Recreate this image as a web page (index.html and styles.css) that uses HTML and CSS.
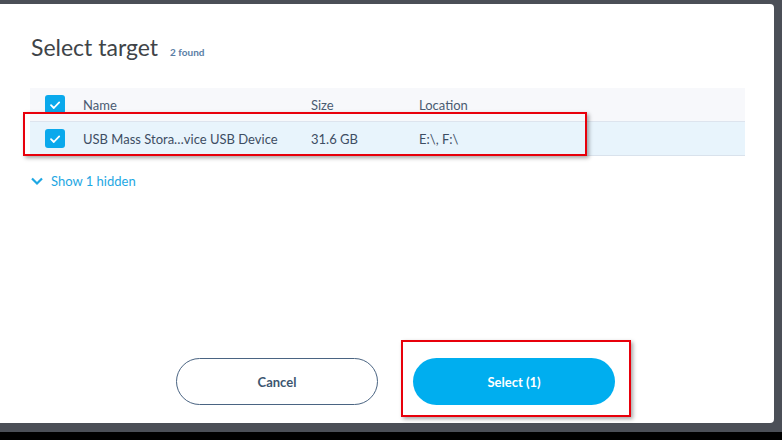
FILE: index.html
```html
<!DOCTYPE html>
<html lang="en">
<head>
  <meta charset="UTF-8">
  <meta name="viewport" content="width=device-width, initial-scale=1.0">
  <title>Select target</title>
  <link rel="stylesheet" href="styles.css">
</head>
<body>
  <div id="screen">
    <div class="dialog">
      <div class="title-bar">
        <h1>Select target</h1>
        <span class="count">2 found</span>
      </div>

      <div class="table">
        <div class="row head">
          <span class="check"><svg viewBox="0 0 20 20"><path d="M6 10.2l2.8 2.8 5.4-5.6"/></svg></span>
          <span>Name</span>
          <span>Size</span>
          <span>Location</span>
        </div>
        <div class="row selected">
          <span class="check"><svg viewBox="0 0 20 20"><path d="M6 10.2l2.8 2.8 5.4-5.6"/></svg></span>
          <span>USB Mass Stora…vice USB Device</span>
          <span>31.6 GB</span>
          <span>E:\, F:\</span>
        </div>
      </div>

      <a class="toggle" href="#">
        <svg viewBox="0 0 14 10"><path d="M2 2.5l5 5 5-5"/></svg>
        Show 1 hidden
      </a>

      <div class="footer">
        <button class="btn cancel">Cancel</button>
        <button class="btn primary">Select (1)</button>
      </div>

      <!-- annotation boxes -->
      <div class="mark mark-row"></div>
      <div class="mark mark-btn"></div>
    </div>
  </div>
  <div id="taskbar"></div>
</body>
</html>
```

FILE: styles.css
```css
body {
  margin: 0;
  background-color: #4b4f57;
  font-family: 'Lato', 'Liberation Sans', sans-serif;
  width: 782px;
  height: 440px;
  overflow: hidden;
}

#screen {
  height: 432px;
  padding-top: 4px;
  box-sizing: border-box;
}

#taskbar {
  height: 8px;
  background-color: #000;
}

.dialog {
  position: relative;
  width: 774px;
  height: 419px;
  background-color: #fff;
  border-radius: 0 4px 4px 0;
  padding: 0 29px 0 30px;
  box-sizing: border-box;
  display: flex;
  flex-direction: column;
}

.title-bar {
  display: flex;
  align-items: baseline;
  padding: 29px 0 0 1px;
  height: 54px;
  box-sizing: border-box;
}

h1 {
  margin: 0;
  font-size: 23px;
  font-weight: 400;
  color: #404448;
}

.count {
  margin-left: 12px;
  font-size: 10px;
  font-weight: 700;
  color: #5a7ea5;
}

.table {
  margin-top: 30px;
}

.row {
  display: grid;
  grid-template-columns: 38px 228px 108px 1fr;
  align-items: center;
  padding-left: 15px;
  height: 33px;
  font-size: 13px;
  color: #3d4d63;
}

.row.head {
  background-color: #f7f8fb;
  color: #4a5b72;
  border-bottom: 1px solid #dde4ee;
}

.row.selected {
  background-color: #e8f4fc;
  border-bottom: 1px solid #d9e2ec;
}

.check {
  width: 20px;
  height: 19px;
  border-radius: 3px;
  background-color: #0aa9ec;
  display: flex;
  align-items: center;
  justify-content: center;
}

.check svg {
  width: 20px;
  height: 20px;
  fill: none;
  stroke: #fff;
  stroke-width: 1.8;
  stroke-linecap: round;
  stroke-linejoin: round;
}

.toggle {
  display: flex;
  align-items: center;
  gap: 7px;
  margin-top: 17px;
  font-size: 13px;
  color: #1ea7e3;
  text-decoration: none;
}

.toggle svg {
  width: 14px;
  height: 10px;
  fill: none;
  stroke: #1ea7e3;
  stroke-width: 2.2;
}

.footer {
  margin-top: auto;
  margin-bottom: 18px;
  display: flex;
  gap: 35px;
  padding-left: 146px;
}

.btn {
  width: 202px;
  height: 47px;
  border-radius: 24px;
  font-family: 'Lato', 'Liberation Sans', sans-serif;
  font-size: 13px;
  font-weight: 700;
  cursor: pointer;
}

.btn.cancel {
  background-color: #fff;
  border: 1px solid #4a6482;
  color: #3d5670;
}

.btn.primary {
  background-color: #00aeef;
  border: none;
  color: #fff;
}

.mark {
  position: absolute;
  border: 2px solid #e8000b;
  box-shadow: 2px 2px 4px rgba(0, 0, 0, 0.35);
  box-sizing: border-box;
}

.mark-row {
  left: 23px;
  top: 108px;
  width: 564px;
  height: 44px;
}

.mark-btn {
  left: 401px;
  top: 336px;
  width: 230px;
  height: 77px;
}
```
